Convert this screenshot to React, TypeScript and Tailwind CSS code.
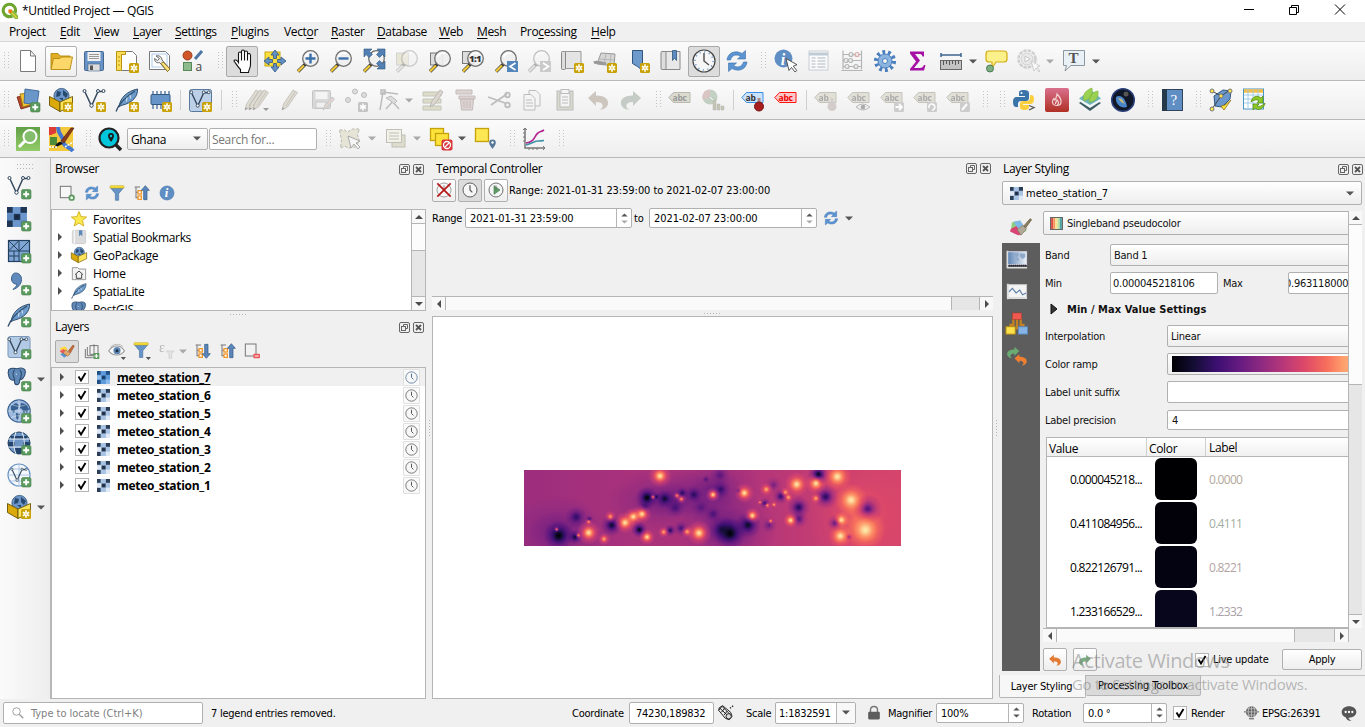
import React from "react";

const ui = "font-['Open_Sans','Noto_Sans',sans-serif] text-[12px] tracking-[-0.35px]";
const tah = "font-['DejaVu_Sans_Condensed','DejaVu_Sans',sans-serif] text-[11px] tracking-[-0.25px] [&_span]:shrink-0 [&_span]:pt-[2px]";

/* ---------- badges shared by many icons ---------- */
const Star = () => (
  <g>
    <rect x="14" y="14" width="10" height="10" rx="1.5" fill="#c9a208" />
    <path d="M19 15.2v7.6M15.8 17.2l6.4 3.6M22.2 17.2l-6.4 3.6" stroke="#fff" strokeWidth="1.6" />
    <circle cx="19" cy="19" r="1" fill="#e8d36a" />
  </g>
);
const Plus = () => (
  <g>
    <rect x="14.5" y="14.5" width="9.5" height="9.5" rx="1.5" fill="#5b9a5e" stroke="#4b844e" strokeWidth=".6" />
    <path d="M19.2 16.2v6M16.2 19.2h6" stroke="#fff" strokeWidth="1.9" />
  </g>
);
const GreyBadge = () => <rect x="14" y="14" width="10" height="10" rx="1.5" fill="#c4c4c4" />;

const Lens = ({ on = true }: { on?: boolean }) => (
  <g opacity={on ? 1 : 0.4}>
    <path d="M9.5 15 2 22.5" stroke="#333" strokeWidth="3.4" />
    <path d="M8 16.5 2 22.4" stroke={on ? "#f2cb3a" : "#ccc"} strokeWidth="2.2" />
    <circle cx="14.5" cy="9.5" r="7.8" fill="#efefef" fillOpacity=".92" stroke="#6f6f6f" strokeWidth="1.3" />
    <path d="M9.5 8a6 6 0 0 1 8-3.5" stroke="#fff" strokeWidth="1.6" fill="none" />
  </g>
);
const Vee = () => (
  <g fill="none" stroke="#34495e" strokeWidth="1.5">
    <path d="M3 4 9.5 18 16 3.5h5" />
    <g fill="#fff" strokeWidth="1">
      <circle cx="2.5" cy="3" r="1.5" />
      <circle cx="9.5" cy="17.5" r="1.7" />
      <circle cx="16" cy="3" r="1.5" />
      <circle cx="21.5" cy="3" r="1.5" />
    </g>
  </g>
);
const Feather = () => (
  <g>
    <path d="M4 19C5 9 13 3 22.5 1 23 8 18 15 6 17.5z" fill="#6d9bcb" stroke="#2f4d6d" strokeWidth="1" />
    <path d="M1 23.5C4 15 12 8 20 3" stroke="#2f4d6d" strokeWidth="1.3" fill="none" />
    <path d="M12 9.5l-.5 4M15 7l.5 3.5" stroke="#dbe8f5" strokeWidth="1" />
  </g>
);
const BoxGlobe = () => (
  <g>
    <circle cx="12.5" cy="8" r="7.6" fill="#6b95c8" stroke="#2e4f74" strokeWidth=".8" />
    <path d="M8 3l4 1-1 4-4 1zM14 2l5 4-2 4-3-3zM10 10l4 0 0 3z" fill="#27496d" />
    <path d="M0.5 8.5 11 14v9.5L.5 17.5z" fill="#d9aa0a" stroke="#6a5200" strokeWidth=".9" />
    <path d="M23.5 8.5 11 14v9.5l12.5-6z" fill="#fbe35a" stroke="#6a5200" strokeWidth=".9" />
  </g>
);
const Tag = ({ t = "abc", fill = "#dcdbd0", stroke = "#b9b8ae", ink = "#999" }: { t?: string; fill?: string; stroke?: string; ink?: string }) => (
  <g>
    <path d="M.8 9.5 5.5 4.5H22v10H5.5z" fill={fill} stroke={stroke} strokeWidth="1" />
    <text x="4.5" y="12.8" fontSize="8.5" fontWeight="700" fill={ink} fontFamily="Open Sans" letterSpacing="-.2">{t}</text>
  </g>
);
const Refresh = () => (
  <g fill="#5b94d0" stroke="#3a70ad" strokeWidth=".6">
    <path d="M2 11C3 3 11 1 17 4.500L20.5 1.5V10h-8l3-2.8C11 5 7 6 5.5 11z" />
    <path d="M22 13c-1 8-9 10-15 6.5L3.5 22.5V14h8l-3 2.8C13 19 17 18 18.5 13z" />
  </g>
);
const Raster = ({ a = "#2b3e58", b = "#a9c3e4", m = "#dfe9f6" }: { a?: string; b?: string; m?: string }) => (
  <g>
    <rect width="24" height="24" fill={b} />
    <rect width="7" height="7" fill={a} />
    <rect x="16" width="8" height="7" fill={a} />
    <rect x="8" y="8" width="8" height="8" fill={a} />
    <rect y="16" width="7" height="8" fill={a} />
    <rect x="7" width="9" height="8" fill={b} />
    <rect x="16" y="16" width="8" height="8" fill={m} />
    <rect x="7" y="16" width="9" height="8" fill={b} />
    <rect y="8" width="8" height="8" fill={m} />
    <path d="M10 10h4v4h-4z" fill="#0d1826" opacity=".5" />
  </g>
);
const Clock = ({ c = "#555" }: { c?: string }) => (
  <g fill="none" stroke={c} strokeWidth="1.4">
    <circle cx="12" cy="12" r="10.5" fill="#f7f7f7" />
    <path d="M12 5v7l3.5 3.5" strokeWidth="1.8" />
  </g>
);
const Globe = () => (
  <g>
    <circle cx="12" cy="12" r="11.2" fill="#9db9de" stroke="#3d6493" strokeWidth="1.2" />
    <path d="M4 7l5-3 3 2-1 4-3 1-1 3-3-3zM14 4l5 1 3 5-2 4-2-2-1 3-2-5-2-1zM9 14l4 1-2 6-2-2z" fill="#35608f" />
    <path d="M1 12h22M12 1v22M4 5c5 3 11 3 16 0M4 19c5-3 11-3 16 0" stroke="#fff" strokeWidth=".6" fill="none" opacity=".7" />
  </g>
);
const Brushy = () => (
  <g>
    <path d="M1 8l8-3 4 5-6 5z" fill="#ffd83c" />
    <path d="M1 12l6-3 6 6-5 4z" fill="#ef5b5b" />
    <path d="M2 17l6-3 5 4-5 4z" fill="#5b94d0" />
    <path d="M10 10l7 6-4 4-7-5z" fill="#e3a869" stroke="#8a5a22" strokeWidth=".7" />
    <path d="M14 12l7-9 2 1.500L17 15z" fill="#c96b35" stroke="#8a4a22" strokeWidth=".8" />
  </g>
);
const SumArrow = ({ up }: { up?: boolean }) => (
  <g>
    <path d="M1 3h8M3 3v17M3 11h4M3 19h6" stroke="#777" strokeWidth="1.5" />
    <rect x="6" y="8.5" width="5" height="5" fill="#fff" stroke="#f29a2e" strokeWidth="2" />
    <rect x="6" y="16.5" width="5" height="5" fill="#fff" stroke="#f29a2e" strokeWidth="2" />
    {up ? <path d="M17 1l6 7h-3.500v14h-5V8H11z" fill="#5a86bb" stroke="#2e547f" /> : <path d="M17 23l6-7h-3.500V2h-5v14H11z" fill="#5a86bb" stroke="#2e547f" />}
  </g>
);
const Funnel = () => (
  <g>
    <path d="M2 4h20l-7.500 9v10h-5V13z" fill="#6794c6" stroke="#3c6797" strokeWidth=".8" />
    <rect x="1.5" y="1" width="21" height="3.5" rx="1" fill="#f9e03c" stroke="#c5a60b" strokeWidth=".8" />
  </g>
);
const Elephant = () => (
  <g fill="#6189b8" stroke="#28486c" strokeWidth="1.2">
    <path d="M2 3c4-3 8-1 10-1 3-1 7-1 9 1 2 4-1 11-5 12l-1 0c0 4-1 6-4 6-3-1-2-5-2-6C3 18 0 8 2 3z" />
    <path d="M9 3c-3 3-2 8 0 11M15 3c3 3 2 9 0 12" fill="none" />
    <path d="M11 8v1" stroke="#fff" />
  </g>
);
const Undo = ({ c }: { c: string }) => <path d="M2 10l8-7v4.500c8 0 13 3 12 9-1 3-4 5-8 5.500 4-3 4-8-4-8V18z" fill={c} />;
const Redo = ({ c }: { c: string }) => <path d="M22 10l-8-7v4.500C6 7.500 1 10.500 2 16.500c1 3 4 5 8 5.500-4-3-4-8 4-8V18z" fill={c} />;
const Pencil = ({ x = 0 }: { x?: number }) => (
  <g transform={`translate(${x} 0)`}>
    <path d="M4 22l1.500-6L15 2l4.500 2.500L9.500 19z" fill="#dedbd3" stroke="#bfbcb5" strokeWidth=".8" />
    <path d="M4 22l.6-2.500 2 1z" fill="#999" />
    <path d="M8 18L17 4" stroke="#c6c3bb" strokeWidth="1" />
  </g>
);

const icons: Record<string, React.ReactNode> = {
  qgis: (
    <g>
      <path d="M12 1a11 11 0 1 0 5.500 20.500l-3.300-3.800A6.500 6.500 0 1 1 18 13.500l3.500 3.500A11 11 0 0 0 12 1z" fill="#6da52f" />
      <path d="M12 12h5l7 7v5h-4l-8-8z" fill="#8dbb35" />
      <path d="M10.500 10.500h5v5h-5z" fill="#ee7913" />
      <path d="M15 15l7 7" stroke="#f3d84a" strokeWidth="1.5" />
    </g>
  ),
  new: <path d="M4.500 1.500h10l5 5.500v15.500h-15zM14.500 1.500V7h5" fill="#fff" stroke="#7b7b7b" />,
  open: (
    <g stroke="#b68a0c" strokeWidth=".9">
      <path d="M2 20V4.500h7l2 2.500h10v13z" fill="#dfae24" />
      <path d="M2 20.500 4.500 9.500H11l1.500-1.500H23.500L21 20.500z" fill="#fcd769" />
    </g>
  ),
  save: (
    <g>
      <rect x="2.5" y="2.5" width="19" height="19" rx="1" fill="#6792c5" stroke="#46688f" />
      <rect x="5.5" y="3" width="13" height="9" fill="#f1f1f1" />
      <path d="M7 5.500h10M7 7.500h10M7 9.500h10" stroke="#9a9a9a" />
      <rect x="6" y="15" width="12" height="7" fill="#dcdcdc" stroke="#46688f" strokeWidth=".6" />
      <rect x="8" y="16.5" width="3" height="4.5" fill="#555" />
    </g>
  ),
  layout: (
    <g>
      <path d="M6.500 2.500h11l4 4v15h-15z" fill="#fff" stroke="#777" />
      <path d="M1.500 2.500h9v3h-4v16h-5z" fill="#fbdd58" stroke="#b99210" />
      <path d="M3 8h2M3 12h2M3 16h2" stroke="#b99210" />
      <Star />
    </g>
  ),
  manager: (
    <g>
      <path d="M1.500 2.500h16l4 4v14h-20z" fill="#fff" stroke="#777" />
      <rect x="4" y="5" width="15" height="13" fill="none" stroke="#aecbe8" />
      <path d="M8 7c3-1 6 1 6 4l8 9-2.500 2.500-8-9c-3 1-5-1-5-4l3 2 2-2z" fill="#eee" stroke="#666" />
      <path d="M15 13l7 7-2.500 2.500-6.500-8z" fill="#f8e07a" stroke="#8a6d1c" strokeWidth=".8" />
    </g>
  ),
  style: (
    <g>
      <circle cx="6.5" cy="6.500" r="4.5" fill="#d0562a" stroke="#9a3d1c" />
      <path d="M14 10l7-8" stroke="#4d75a6" strokeWidth="3" />
      <rect x="2.5" y="13.500" width="8" height="8" fill="#8dbb8e" stroke="#56885a" />
      <text x="14.5" y="21.500" fontSize="12" fill="#444" fontFamily="Open Sans">a</text>
    </g>
  ),
  hand: <path d="M8 23v-3C5 17 3.500 14 1.500 11.500c.5-2 3-1 4.500 1.500V4c0-2 3-2 3 0V2c0-2 3-2 3 0v1c0-2 3-2 3 0v2c.5-1.500 3-1.500 3 1v9c0 4-2 5-2 8zM9 4v7M12 3v8M15 5v6" fill="#fff" stroke="#111" strokeWidth="1.1" transform="translate(2.5 .5)" />,
  pan: (
    <g>
      <rect x="2" y="3" width="15" height="14" fill="#fadf3d" stroke="#c8a70b" />
      <path d="M12 1l4 5h-2.500v3.500h-3V6H8zM12 23l4-5h-2.500v-3.500h-3V18H8zM1 12l5-4v2.500h3.500v3H6V16zM23 12l-5-4v2.500h-3.500v3H18V16z" fill="#6391c6" stroke="#2f567f" strokeWidth=".8" />
    </g>
  ),
  zin: <g><Lens /><path d="M14.500 4.500v10M9.500 9.500h10" stroke="#3d70aa" strokeWidth="2.4" /></g>,
  zout: <g><Lens /><path d="M9.500 9.500h10" stroke="#3d70aa" strokeWidth="2.4" /></g>,
  zfull: (
    <g><Lens />
      <path d="M2 0h8L7.500 2.500l3 3-3.500 3-3-3L2 8zM23 0v8l-2.500-2.500-3 3-3-3 3-3L15 0zM23 20h-8l2.500-2.500-3-3 3-3 3 3L23 12z" fill="#527fb4" stroke="#2f567f" strokeWidth=".6" />
    </g>
  ),
  zsel: <g opacity=".8"><rect x="1.5" y="4" width="12" height="12" fill="#e4e2cd" stroke="#ccc" /><Lens on={false} /></g>,
  zlay: <g><rect x="2.5" y="4" width="12" height="12" fill="#ddd" stroke="#777" /><Lens /></g>,
  znat: <g><rect x="1.5" y="2.5" width="12" height="12" fill="#ddd" stroke="#777" /><Lens /><text x="8" y="13" fontSize="9.5" fontWeight="800" fill="#333" fontFamily="Open Sans" letterSpacing="-.6">1:1</text></g>,
  zlast: <g><Lens /><rect x="13" y="12" width="11" height="11" fill="#5386bb" /><path d="M21.500 14l-5.500 3.500 5.500 3.500" fill="none" stroke="#fff" strokeWidth="1.7" /></g>,
  znext: <g><Lens on={false} /><rect x="13" y="12" width="11" height="11" fill="#cacaca" /><path d="M16 14l5.500 3.500-5.500 3.500" fill="none" stroke="#fff" strokeWidth="1.7" /></g>,
  nmap: <g><path d="M5 2.500h16v17H5z" fill="#e4e4e4" stroke="#999" /><rect x="1.5" y="2.5" width="4" height="18" rx="1" fill="#ddd" stroke="#888" /><Star /></g>,
  n3d: <g><path d="M8 4l14 1-1 12-17-2z" fill="#d6d6d6" stroke="#999" /><path d="M1 14c4-3 8 2 12 0" stroke="#999" strokeWidth="3" fill="none" /><path d="M6 10l15 1M13 5l-2 10M18 5l-1 11" stroke="#aaa" strokeWidth=".7" /><Star /></g>,
  nbook: <g><path d="M6.500 1.500h10v20l-5-4-5-3z" fill="#6d99cb" stroke="#2f567f" /><Star /></g>,
  book: <g><path d="M5 2.500h16v18H5z" fill="#e8e8e8" stroke="#888" /><rect x="2" y="2.5" width="5" height="18" rx="1" fill="#ddd" stroke="#888" /><path d="M13.500 1.500h4v10l-2-2.500-2 2.500z" fill="#5f8cc0" stroke="#2f567f" strokeWidth=".8" /></g>,
  clockbig: (
    <g fill="none">
      <circle cx="12" cy="12" r="11" fill="#f6f6f6" stroke="#444" strokeWidth="1.2" />
      <circle cx="12" cy="12" r="9" stroke="#6b9bd0" strokeWidth="1.5" strokeDasharray="1.2 3.5" />
      <path d="M12 4v8l5 4" stroke="#555" strokeWidth="1.5" />
    </g>
  ),
  refresh: <Refresh />,
  ident: (
    <g>
      <circle cx="9.5" cy="9.5" r="9" fill="#5f8ec4" />
      <text x="6.8" y="15.5" fontSize="16" fontStyle="italic" fontWeight="700" fill="#fff" fontFamily="Liberation Serif">i</text>
      <path d="M12 9.500l3 12 2.500-3 3.500 4.500 1.800-1.500-3.500-4.300 3.700-1.500z" fill="#fff" stroke="#444" strokeWidth=".9" />
    </g>
  ),
  table: (
    <g opacity=".6" fill="none" stroke="#aab6bf">
      <rect x="2" y="2" width="19" height="19" fill="#fff" />
      <path d="M2 5h19" stroke="#9cb0bf" strokeWidth="3" />
      <path d="M4.500 9h4M4.500 12h4M4.500 15h4M4.500 18h4M10.500 9h8M10.500 12h8M10.500 15h8M10.500 18h8" strokeWidth="1.3" />
    </g>
  ),
  abacus: (
    <g fill="none" stroke="#b5b5b5" strokeWidth="1.2">
      <path d="M3 1.500v19M21.500 1.500v19M1.500 21.500h21M3 5.500h18M3 11.500h18M3 17.500h18" />
      <g fill="#eee"><circle cx="11" cy="5.5" r="2" /><circle cx="17" cy="5.5" r="2" stroke="#d9a9a9" /><circle cx="6" cy="11.5" r="2" /><circle cx="10.5" cy="11.5" r="2" /><circle cx="7" cy="17.5" r="2" /><circle cx="16" cy="17.5" r="2" /></g>
    </g>
  ),
  gear: (
    <g>
      <circle cx="12" cy="12" r="8.8" fill="none" stroke="#4a7fbd" strokeWidth="4.5" strokeDasharray="2.76 2.76" />
      <circle cx="12" cy="12" r="7" fill="#8bb4e0" stroke="#4a7fbd" />
      <circle cx="12" cy="12" r="2.5" fill="#f4f4f4" stroke="#4a7fbd" />
    </g>
  ),
  sigma: <path d="M4 2.500h14v5h-1.500c-.5-2-1.500-2.500-3.500-2.500H9l5 6.500L8 19h6c2 0 3-1 4-3h1.500L18 21.500H4v-1.500l6-7.500-6-8z" fill="#a510a5" />,
  ruler: <g><path d="M2 6h20M2 4v4M22 4v4" stroke="#3f6690" strokeWidth="1.5" /><rect x="1.5" y="11.5" width="21" height="9" fill="#c3c3c3" stroke="#666" /><path d="M4.500 12v4M7.500 12v3M10.500 12v4M13.500 12v3M16.500 12v4M19.500 12v3" stroke="#555" /></g>,
  tip: <g><path d="M4 2h16q3 0 3 3v5q0 3-3 3h-8l-4 6v-6H5q-3 0-3-3V5q0-3 3-3z" fill="#fcf08a" stroke="#d2ad11" strokeWidth="1.2" /><circle cx="6" cy="19.5" r="3.5" fill="#7cae82" stroke="#4a7b52" /></g>,
  action: <g opacity=".5"><circle cx="10" cy="10" r="8.5" fill="none" stroke="#aaa" strokeWidth="2.5" strokeDasharray="3.5 1" /><circle cx="10" cy="10" r="6" fill="#ddd" stroke="#aaa" /><path d="M8 7l5 3-5 3z" fill="#fff" stroke="#999" /><path d="M14 12l3 10 2-3 3 4 1-1-3-4 3-1z" fill="#fff" stroke="#999" strokeWidth=".8" /></g>,
  text: <g><path d="M1.500 1.500h21v15H9L3 22l1.500-5.500h-3z" fill="#e9f0f6" stroke="#8c979f" /><text x="6.5" y="14" fontSize="15" fontWeight="700" fill="#555" fontFamily="Liberation Serif">T</text></g>,
  layers: <g strokeWidth=".9"><path d="M1 9l11-2 3 11-10 3z" fill="#b5452a" stroke="#7a2b18" /><path d="M4 6l12-1 1 11-10 3z" fill="#f1c233" stroke="#9a760e" /><path d="M9 1l14 2-2 14-13-2z" fill="#6a97ca" stroke="#3a6798" /><Plus /></g>,
  gpkg: <g><BoxGlobe /><Star /></g>,
  vstar: <g><Vee /><Star /></g>,
  fstar: <g><Feather /><Star /></g>,
  chip: <g><path d="M5 3v18M9 3v18M13 3v18M17 3v18M21 3v18" stroke="#466d9a" strokeWidth="1.3" /><rect x="3" y="6.5" width="19" height="10" rx="1" fill="#6794c8" stroke="#33587f" /><Star /></g>,
  virt: <g><rect x="1.5" y="1.5" width="22" height="22" rx="2" fill="#bcd0e7" stroke="#58799d" /><g transform="translate(1 1.5) scale(.92)"><Vee /></g><Star /></g>,
  pencils: <g><Pencil x={-4} /><Pencil x={0} /><Pencil x={4} /><path d="M18 20h6l-3 3z" fill="#999" /></g>,
  pencil: <Pencil />,
  saveed: <g opacity=".75"><rect x="1.5" y="2.5" width="18" height="18" rx="1" fill="#d0d0d0" stroke="#b5b5b5" /><rect x="4.5" y="4" width="12" height="7" fill="#f4f4f4" /><rect x="5" y="14" width="10" height="6" fill="#f0f0f0" stroke="#bbb" /><path d="M12 22l2-5 7-8 2.500 2-7 8z" fill="#dac9c4" stroke="#bbb" /></g>,
  addpts: <g><circle cx="4" cy="12" r="2.500" fill="#ddd" stroke="#bbb" /><circle cx="11" cy="3.5" r="2.500" fill="#ddd" stroke="#bbb" /><circle cx="20" cy="7" r="2.500" fill="#ddd" stroke="#bbb" /><GreyBadge /><path d="M19 15.500v7M16 17.500l6 3M22 17.500l-6 3" stroke="#fff" strokeWidth="1.5" /></g>,
  vertex: <g fill="none" stroke="#bbb" strokeWidth="1.5"><path d="M3 22L6 4l15 2M4 2h4v4H4zM9 21l9-10M14 12l8 9" /><path d="M9 10l5-2 6 5-3 3-3-3z" fill="#ddd" strokeWidth="1" /></g>,
  modattr: <g><path d="M2 4h18v4H2zM2 11h18v4H2zM2 18h18v4H2z" fill="#dddccb" stroke="#c4c4b8" /><path d="M9 19l2-6L19 2l3 2-8 12z" fill="#ddd6d0" stroke="#bdbab4" /></g>,
  trash: <g fill="#dcd3d3" stroke="#c6bbbb"><path d="M2 2h16v4H2z" /><path d="M5 8h16v3H5zM6.500 11h13l-1 11h-11zM10 13v7M13 13v7M16 13v7" /></g>,
  cut: <g stroke="#bdbdbd" fill="none" strokeWidth="1.800"><path d="M1 9l17 6M4 17L20 6" /><circle cx="20.5" cy="17" r="2.300" /><circle cx="20.5" cy="7" r="2.300" /></g>,
  copy: <g fill="#f4f4f4" stroke="#bcbcbc"><path d="M9 2.500h7l4 4V18H9z" /><path d="M4 6.500h7l4 4V22H4zM6 12h6M6 15h7M6 18h7" /></g>,
  paste: <g fill="#f4f4f4" stroke="#bcbcbc"><rect x="4" y="3" width="16" height="19" fill="#d9d9cf" /><rect x="7" y="5" width="10" height="14" /><rect x="8" y="1.5" width="8" height="4" /><path d="M9 9h6M9 12h6M9 15h6" /></g>,
  undo: <Undo c="#cdc6bf" />,
  redo: <Redo c="#c4ccc5" />,
  tag: <g transform="translate(1 0)"><Tag /></g>,
  diag: <g opacity=".8"><circle cx="9" cy="9" r="7.5" fill="#b7c7b8" /><path d="M9 9V1.500A7.500 7.500 0 0 0 2 12z" fill="#d4b9b9" /><path d="M9 9l5 5" stroke="#fff" /><path d="M12 12h3v10h-3zM16 16h3v6h-3zM20 18h3v4h-3z" fill="#b9b9a4" stroke="#aaa" strokeWidth=".5" /></g>,
  pinred: <g><Tag t="ab" fill="#cbe2fb" stroke="#3b8fe8" ink="#333" /><path d="M18 10v8" stroke="#a88" strokeWidth="3" /><circle cx="18" cy="18.5" r="4.5" fill="#a81e1e" stroke="#7a1313" /></g>,
  tagred: <Tag fill="#fbc9c9" stroke="#ff1414" ink="#f00000" />,
  tpin: <g opacity=".8"><Tag t="ab" /><path d="M18 10v8" stroke="#ccc3c3" strokeWidth="2.500" /><circle cx="18" cy="18.5" r="4.5" fill="#ccc3c3" /></g>,
  teye: <g opacity=".8"><Tag /><path d="M9 19q6-6 14 0q-7 6-14 0" fill="#eee" stroke="#aaa" /><circle cx="16" cy="19" r="2.3" fill="#999" /></g>,
  tmove: <g opacity=".8"><Tag /><GreyBadge /><path d="M15.500 19h6M19 16l3 3-3 3" stroke="#fff" strokeWidth="1.8" fill="none" /></g>,
  trot: <g opacity=".8"><Tag /><GreyBadge /><path d="M16 20a3 3 0 1 1 3 2" stroke="#fff" strokeWidth="1.6" fill="none" /></g>,
  tedit: <g opacity=".8"><Tag /><GreyBadge /><path d="M16 22l5-6" stroke="#fff" strokeWidth="2" /></g>,
  python: (
    <g>
      <path d="M12 2c-4 0-5 1-5 3v3h6v1H5c-3 0-4 2-4 5s1 5 3 5h2v-3c0-2 1-3 3-3h5c2 0 3-1 3-3V5c0-2-2-3-5-3z" fill="#3b74a8" />
      <path d="M12 22c4 0 5-1 5-3v-2h-6v-1h7c3 0 4-2 4-5s-1-4-3-4h-1v3c0 2-1 3-3 3h-4c-2 0-3 1-3 3v3c0 2 1 3 4 3z" fill="#fccf3e" />
      <circle cx="9.5" cy="5" r="1" fill="#fff" />
      <path d="M17 17.500l5 2-5 2.500" fill="none" stroke="#555" strokeWidth="1.3" />
    </g>
  ),
  fire: <g><defs><linearGradient id="fr" x2="0" y2="1"><stop stopColor="#d9708c" /><stop offset="1" stopColor="#b03024" /></linearGradient></defs><rect width="24" height="24" rx="2" fill="url(#fr)" /><path d="M12 6c3 3 4 5 4 7.500s-1.500 4-4 4-4.500-1.500-4.500-3.500 1-3 1.500-3.500l1 1.500c1-2 2-3.500 2-6zM10.500 16c0-3 1.500-2 1.500-4 2 2 2 4.500 0 4.500" fill="none" stroke="#f3d4d4" strokeWidth="1.2" /></g>,
  leaf: <g><path d="M1 15l11 8 11-8-4-2-14-1z" fill="#3c5b62" /><path d="M1 13l11 7 11-7-11-6z" fill="#f1f6f6" /><path d="M1 10.500L12 17l11-6.500L13 2z" fill="#6fb5b8" /><path d="M6 13C4 6 8 2 14 0c1 6-1 11-8 13zM11 14c0-6 3-10 9-11 1 7-3 11-9 11z" fill="#9bd150" stroke="#78ae34" strokeWidth=".5" /></g>,
  earth: <g><circle cx="12" cy="12" r="11.3" fill="#101728" stroke="#2b417d" strokeWidth="1.5" /><path d="M5 9c5-3 10 2 11 10-6 2-12-3-11-10z" fill="#4a86ca" /><path d="M7 10l4 1 3 5-4-2z" fill="#c5b97d" /><circle cx="15" cy="6" r="2.500" fill="#555" /></g>,
  help: <g><rect x="2.5" y="1.5" width="20" height="21" fill="#5f8ec5" stroke="#31455c" /><rect x="2" y="1" width="5" height="22" fill="#26394b" /><text x="10.5" y="17" fontSize="15" fill="#fff" fontFamily="Liberation Serif">?</text></g>,
  topo: <g><path d="M5 8l9-6 8 1-1 8-8 8-7-1z" fill="#6b98cc" stroke="#305580" /><path d="M3 21L12 8l9-6M3 3l9 5" stroke="#444" fill="none" /><path d="M12 18l3 4 7-10-6 5z" fill="#ffe23c" stroke="#8a6f10" strokeWidth=".8" /><g fill="#ffe84e" stroke="#777"><circle cx="3" cy="3" r="2" /><circle cx="21" cy="3" r="2" /><circle cx="12" cy="8" r="2" /><circle cx="3" cy="21" r="2" /></g></g>,
  sheet: <g><rect x="1.5" y="1" width="20" height="20" fill="#fff" stroke="#4a97c6" /><path d="M2 3h19" stroke="#f3bd4a" strokeWidth="3.5" /><path d="M2 7h19M2 11h19M2 15h19M6 2v18M11 2v18M16 2v18" stroke="#9ac8e5" strokeWidth=".9" /><path d="M9 14c1-6 7-7 10-4l2-2v7h-6l2-2c-2-2-5-1-8 1zM23 15c-1 6-7 8-10 5l-2 2v-6h6l-2 2c2 1 5 0 8-3z" fill="#8bc926" stroke="#56870f" strokeWidth=".7" /></g>,
  osm: <g><defs><linearGradient id="gr" x2="0" y2="1"><stop stopColor="#62a047" /><stop offset="1" stopColor="#93cc69" /></linearGradient></defs><rect width="24" height="24" fill="url(#gr)" /><circle cx="14" cy="9.5" r="6.5" fill="#84bd6b" stroke="#fff" strokeWidth="2" /><path d="M9 14l-6 6" stroke="#fff" strokeWidth="3" /></g>,
  osmed: <g><rect width="24" height="24" fill="#f4c83c" /><path d="M9 0c0 8 5 8 5 14s6 5 10 10" stroke="#4378d2" strokeWidth="4" fill="none" /><path d="M1 10h7v8H1z" fill="#4f8c3a" /><path d="M0 0h7v6l-5 2-2 0z" fill="#de3a36" /><path d="M12 14L22 1l3 0-10 15z" fill="#8c3b1a" stroke="#54220f" strokeWidth=".7" /><path d="M5 21c2-4 5-7 7-6l2 2c-3 1-5 2-9 4z" fill="#111" /><path d="M0 20h8M16 20l8-5" stroke="#fff" strokeWidth="1.5" strokeDasharray="2 1" /></g>,
  find: <g><circle cx="11" cy="11" r="9.5" fill="#00c6dc" stroke="#222" strokeWidth="2.2" /><path d="M18 18l5 5" stroke="#222" strokeWidth="3.5" /><path d="M13 6a3 3 0 0 1 3 3c0 2-3 6-3 6s-3-4-3-6a3 3 0 0 1 3-3z" fill="#1c1c1c" /><circle cx="13" cy="9" r="1.2" fill="#00c6dc" /></g>,
  selfeat: <g><path d="M1.500 3h5l3 2 5-3h7l-2 6 2 6-4 6-7 1-4-2-4 2 1-8z" fill="#e5e4d6" stroke="#b9b9ac" strokeDasharray="3 1.5" /><path d="M10 9l3 12 3-4 4 5 2-2-4-4 4-2z" fill="#f5f5f5" stroke="#aaa" /></g>,
  selform: <g stroke="#c0c0b5"><rect x="7" y="8" width="13" height="12" fill="#dddcce" /><rect x="1.5" y="2.5" width="15" height="13" fill="#f2f2ea" /><path d="M4 6h10M4 9h10M4 12h10" /></g>,
  desel: <g><rect x="1.5" y="1.5" width="13" height="12" fill="#fde23c" stroke="#c5a20b" strokeWidth="1.3" /><rect x="6.5" y="6.5" width="13" height="12" fill="#fde23c" stroke="#c5a20b" strokeWidth="1.3" /><rect x="12.5" y="12.5" width="11" height="11" rx="2" fill="#d9363c" /><circle cx="18" cy="18" r="3.5" fill="none" stroke="#fff" strokeWidth="1.3" /><path d="M15.500 20.500l5-5" stroke="#fff" strokeWidth="1.2" /></g>,
  selloc: <g><rect x="2.5" y="1.5" width="13" height="13" fill="#fde752" stroke="#c5a20b" strokeWidth="1.3" /><path d="M19.500 12.500a3.300 3.300 0 0 1 3.300 3.300c0 2.200-3.300 6.200-3.300 6.200s-3.300-4-3.300-6.200a3.300 3.300 0 0 1 3.300-3.300z" fill="#56779a" /><circle cx="19.5" cy="15.5" r="1.2" fill="#fff" /></g>,
  plot: <g fill="none"><path d="M3 1v20h20" stroke="#777" strokeWidth="1.5" /><path d="M1 3l2-2 2 2M21 19l2 2-2 2M1 6h2M1 10h2M1 14h2M7 21v2M11 21v2M15 21v2" stroke="#777" /><path d="M4 16c9-1 8-7 12-10 2-2 3-1 6-3" stroke="#b3218d" strokeWidth="1.6" /><path d="M4 18c8-2 8-4 12-4 3 0 3 0 6-.500" stroke="#3d93a9" strokeWidth="1.5" /></g>,
  vplus: <g><Vee /><Plus /></g>,
  rplus: <g><g transform="scale(.83)"><Raster a="#1f3553" b="#6c96cc" m="#5c87bd" /></g><Plus /></g>,
  mesh: <g><rect x="1.5" y="1.5" width="21" height="21" fill="#7ea5d3" stroke="#24405f" strokeWidth="1.2" /><path d="M1.500 12h21M12 1.500v21M1.500 1.500l10.500 10.500M12 1.500L1.500 12M22.500 1.500L12 12M7 12v10M1.500 17H12" stroke="#24405f" fill="none" /><Plus /></g>,
  comma: <g><path d="M8.500 2c4 0 6 3 6 6.500C14.500 13 11 17 6 18.500c2.500-2.500 4-4 4-5.500-3 .5-5.500-2-5.500-5S6 2 8.500 2z" fill="#5f8abb" stroke="#3b6490" /><Plus /></g>,
  fplus: <g><Feather /><Plus /></g>,
  vlplus: <g><rect x="1" y="1.5" width="22" height="21" rx="2" fill="#b2cae5" stroke="#7b98b9" /><g transform="translate(0 1.5) scale(.9)"><Vee /></g><Plus /></g>,
  pgplus: <g><g transform="scale(.85)"><Elephant /></g><Plus /></g>,
  gplus: <g><Globe /><Plus /></g>,
  wcs: <g><circle cx="12" cy="12" r="11" fill="#6c94c4" stroke="#24405f" /><path d="M4 5h16v3H4zM1 11h7v5H1zM16 11h7v5h-7zM8 17h8v6H8z" fill="#24466e" /><path d="M1 8h22M1 16h22M9 1c-3 8-3 14 0 22M15 1c3 8 3 14 0 22" stroke="#e8eff7" fill="none" /><Plus /></g>,
  wfs: <g><circle cx="12" cy="12" r="11" fill="#f5f8fc" stroke="#6e97c5" strokeWidth="1.2" /><path d="M1 12h22M12 1v22M3 6h18M3 18h18" stroke="#9dbbe0" strokeWidth=".8" /><g transform="translate(3 4) scale(.75)"><Vee /></g><Plus /></g>,
  boxadd: <g><BoxGlobe /><Star /></g>,
  addsq: <g><rect x="2" y="2" width="16" height="17" fill="#f7f7f7" stroke="#777" strokeWidth="1.5" /><circle cx="19" cy="19" r="3.5" fill="#e9f5e9" stroke="#5b9a5e" strokeWidth="2.5" /></g>,
  rmsq: <g><rect x="2" y="1.5" width="16" height="18" fill="#f2f2f2" stroke="#777" strokeWidth="1.5" /><rect x="14" y="16" width="10" height="7" rx="1.5" fill="#ea5558" /><path d="M16 19.500h6" stroke="#fff" strokeWidth="1.5" /></g>,
  funnel: <Funnel />,
  funneldd: <g><g transform="scale(.9)"><Funnel /></g><path d="M17 20h7l-3.500 4z" fill="#555" /></g>,
  up: <SumArrow up />,
  down: <SumArrow />,
  info: <g><circle cx="12" cy="12" r="10.5" fill="#5f8ec4" stroke="#4a78ad" /><text x="8.5" y="18.5" fontSize="19" fontStyle="italic" fontWeight="700" fill="#fff" fontFamily="Liberation Serif">i</text></g>,
  fav: <path d="M12 .8l3.200 7.700 8.300.5-6.400 5.300 2.100 8.300L12 18l-7.200 4.600 2.100-8.300L.5 9l8.300-.5z" fill="#fce94f" stroke="#c9a50a" strokeWidth="1.2" />,
  bm: <g><rect x="2" y="2" width="20" height="20" rx="2" fill="#dcdcdc" stroke="#c4c4c4" /><path d="M5 2v20" stroke="#f5f5f5" strokeWidth="2" /><path d="M12 2h5v9l-2.500-2.500L12 11z" fill="#6189b8" /></g>,
  pkg: <BoxGlobe />,
  home: <g><path d="M2 4h8l2 2h10v16H2z" fill="#f3f3f3" stroke="#8a8a8a" strokeWidth="1.3" /><path d="M6 14.500L12 9l6 5.500M8 14v6h8v-6" stroke="#444" strokeWidth="1.5" fill="none" /></g>,
  sl: <Feather />,
  pg: <Elephant />,
  brush: <Brushy />,
  group: <g fill="#f2f2f2" stroke="#666" strokeWidth="1.3"><path d="M2 9v13h11M5 6v13h11" fill="none" /><rect x="9" y="4" width="12" height="13" /><path d="M15 2v15" /><rect x="14" y="15" width="9" height="9" rx="1" fill="#5b9a5e" stroke="none" /><path d="M18.500 16.500v6M15.500 19.500h6" stroke="#fff" strokeWidth="1.7" /></g>,
  eye: <g><path d="M1 12c5-9 16-9 21 0-5 7-16 7-21 0z" fill="#fbfbfb" stroke="#999" strokeWidth="1.5" /><circle cx="12" cy="11.5" r="4.8" fill="#5f87b6" /><circle cx="12" cy="11.5" r="2" fill="#1d2e44" /><path d="M3 7c5-5 12-5 17-1" stroke="#aaa" fill="none" /><path d="M17 20h7l-3.500 4z" fill="#555" /></g>,
  eps: <g opacity=".7"><text x="0" y="14" fontSize="21" fill="#999" fontFamily="Liberation Serif">ε</text><path d="M11 12h12l-4 4v7h-4v-7z" fill="#ddd" stroke="#bbb" /></g>,
  raster: <Raster />,
  rastersel: <Raster a="#1f4f85" b="#5f9bdc" m="#8fbcea" />,
  clock: <Clock />,
  clockblue: <Clock c="#4a6c92" />,
  noclock: <g><Clock c="#999" /><path d="M2 2l20 20M22 2L2 22" stroke="#b61b1b" strokeWidth="2.6" /></g>,
  play: <g><circle cx="12" cy="12" r="10.5" fill="#f5f5f5" stroke="#666" strokeWidth="1.4" /><path d="M9 5.500l9 6.500-9 6.500z" fill="#5f9f68" stroke="#467b4d" /><path d="M12 5v8" stroke="#666" /></g>,
  pseudo: <g><rect x="1" y="1" width="22" height="22" fill="#fff" stroke="#666" strokeWidth="2" /><path d="M2 2h4v20H2z" fill="#d94f40" /><path d="M6 2h4v20H6z" fill="#f5955a" /><path d="M10 2h4v20h-4z" fill="#fde28c" /><path d="M14 2h4v20h-4z" fill="#b5e0a0" /><path d="M18 2h4v20h-4z" fill="#4fa0a0" /></g>,
  symb: <g><path d="M2 7l9-2 7 11-8 5-9-5z" fill="#8bd07c" /><path d="M4 6l7-1 4 6-7 3z" fill="#7fb8e6" /><path d="M1 14l6-3 6 9-4 1-9-4z" fill="#d94573" /><path d="M8 15l6-5 4 4-6 7z" fill="#b3aa97" stroke="#847b69" strokeWidth=".8" /><path d="M15 11l7-8 1.500 1L17 13z" fill="#8d8263" stroke="#6e6547" /></g>,
  transp: <g><defs><linearGradient id="tp"><stop stopColor="#5c82b5" /><stop offset="1" stopColor="#eef2f6" /></linearGradient></defs><rect x="1.5" y="3" width="21" height="14" fill="url(#tp)" stroke="#dde" /><path d="M9 5l4-1 1 3-3 2zM12 8l2 3-1 3-2-3zM15 5l6 0 0 4-3 2-3-3z" fill="#8fa9c9" /><path d="M1.500 2v19M1 20.500h22" stroke="#ddd" strokeWidth="1.800" /><path d="M3 18h19" stroke="#223" strokeWidth="1.500" strokeDasharray="1.5 .7" /></g>,
  histo: <g><rect x="1.5" y="4" width="21" height="14" fill="#f4f4f4" stroke="#ccc" /><path d="M3 12l4-4 4 5 4-3 3 5 4-2" stroke="#5c7fa8" strokeWidth="1.2" fill="none" /><path d="M2 3v17M1 18.500h22" stroke="#ddd" strokeWidth="2" /></g>,
  attr: <g><path d="M8 5v8H5v5M16 5v8h3v5M12 6v12" stroke="#c68222" strokeWidth="2.5" fill="none" /><rect x="7" y="0" width="10" height="7" fill="#ee5a50" stroke="#b53329" strokeWidth=".6" /><rect x="0" y="15" width="10" height="8" fill="#fde14b" stroke="#b98f12" /><rect x="13.5" y="15" width="10" height="8" fill="#84b3e6" stroke="#5b88bb" /></g>,
  hist: <g><g transform="translate(0 0) scale(.66)"><Redo c="#6aab72" /></g><g transform="translate(8 8) scale(.66)"><Undo c="#f07f32" /></g></g>,
  undoc: <Undo c="#e27b33" />,
  redoc: <Redo c="#79ad82" />,
  mag: <g fill="none" stroke="#999" strokeWidth="1.8"><circle cx="9" cy="9" r="7.5" /><path d="M14.500 14.500l8 8" strokeWidth="2.5" /></g>,
  mouse: <g fill="none" stroke="#222" strokeWidth="1.500"><path d="M2 4l5-3 12 10 2 6-4 5-6-2L1 8z" fill="#eee" /><path d="M3 5l14 13M6 2l13 13M1 8l5-6M5 11l5-6M9 15l5-6" /><circle cx="16" cy="17" r="4" fill="#ddd" /><path d="M18 5l5-4" strokeDasharray="2 2" strokeWidth="2" /></g>,
  lock: <g><path d="M6 12V7c0-8 12-8 12 0v5" fill="none" stroke="#777" strokeWidth="2.5" /><rect x="2" y="10" width="20" height="13" rx="2" fill="#5d5d5d" /></g>,
  crs: <g><circle cx="12" cy="11" r="9" fill="#666" /><path d="M0 11h24M5 6h14M5 16h14M9 20h6v3H9zM9 2.500c-3 5-3 12 0 17M15 2.500c3 5 3 12 0 17M12 2v18" stroke="#d5d5d5" fill="none" strokeWidth="1" /><path d="M0 11h3M21 11h3M8 22h8" stroke="#555" strokeWidth="1.500" /></g>,
  msg: <g><path d="M12 2c6 0 11 3.500 11 8.500S18 19 12 19h-1c1 2 3 4 5 5-5 0-8-2-9-5.500C3 17 1 14 1 10.500 1 5.500 6 2 12 2z" fill="#555" /><circle cx="7" cy="10.5" r="1.7" fill="#fff" /><circle cx="12" cy="10.5" r="1.7" fill="#fff" /><circle cx="17" cy="10.5" r="1.7" fill="#fff" /></g>,
};

const I = ({ n, c = "ml-[9px]", s = "size-6" }: { n: string; c?: string; s?: string }) => (
  <svg viewBox="0 0 24 24" className={`shrink-0 overflow-visible ${s} ${c}`}>{icons[n]}</svg>
);

/* caret used by drop-down tool buttons */
const Dd = ({ c = "", off = false }: { c?: string; off?: boolean }) => (
  <svg viewBox="0 0 8 5" className={`h-[5px] w-2 shrink-0 ${c}`}><path d="M0 .5h8L4 4.500z" fill={off ? "#a9a9a9" : "#555"} /></svg>
);
const UpDown = ({ off = false }: { off?: boolean }) => (
  <div className="flex h-full w-[15px] flex-col items-center justify-center gap-[3px] border-l border-[#b5b5b5]">
    <svg viewBox="0 0 8 5" className="h-[4px] w-[7px]"><path d="M0 4.500h8L4 .5z" fill="#555" /></svg>
    <svg viewBox="0 0 8 5" className="h-[4px] w-[7px]"><path d="M0 .5h8L4 4.500z" fill={off ? "#a9a9a9" : "#555"} /></svg>
  </div>
);
const Tri = ({ d, c = "" }: { d: "l" | "r" | "u" | "d"; c?: string }) => {
  const p = { l: "M6 0v8L2 4z", r: "M2 0v8l4-4z", u: "M0 6h8L4 2z", d: "M0 2h8L4 6z" }[d];
  return <svg viewBox="0 0 8 8" className={`size-2 shrink-0 ${c}`}><path d={p} fill="#4d4d4d" /></svg>;
};
const Grip = ({ c = "" }: { c?: string }) => (
  <div className={`flex h-[18px] w-[5px] shrink-0 justify-between ${c}`}>
    <div className="w-px bg-[repeating-linear-gradient(#c4c4c4_0_1px,transparent_1px_3px)]" />
    <div className="w-px bg-[repeating-linear-gradient(#c4c4c4_0_1px,transparent_1px_3px)]" />
  </div>
);
const HGrip = ({ c = "" }: { c?: string }) => (
  <div className={`h-px w-[17px] shrink-0 bg-[repeating-linear-gradient(90deg,#b5b5b5_0_1px,transparent_1px_3px)] ${c}`} />
);
const VGrip = () => <div className="h-[18px] w-px bg-[repeating-linear-gradient(#b5b5b5_0_1px,transparent_1px_3px)]" />;
const Sep = ({ c = "" }: { c?: string }) => <div className={`h-5 w-px shrink-0 bg-[#cfcfcf] ${c}`} />;

const bar = "flex items-center bg-gradient-to-b from-[#fbfbfb] to-[#eeeeee] border-b border-[#b9b9b9] shrink-0";
const field = "rounded-[2px] border border-[#b0b0b0] bg-white";
const btn = "rounded-[2px] border border-[#b0b0b0] bg-gradient-to-b from-white to-[#eeeeee]";

const DockTitle = ({ t, c }: { t: string; c: string }) => (
  <div className={`flex items-center ${ui} ${c}`}>
    <span className="grow">{t}</span>
    <svg viewBox="0 0 11 11" className="size-[11px]"><g fill="none" stroke="#666"><rect x=".5" y=".5" width="10" height="10" rx="1.5" /><rect x="2.5" y="4.5" width="4" height="4" /><path d="M4.500 4.500v-2h4v4h-2" /></g></svg>
    <svg viewBox="0 0 11 11" className="ml-[3px] size-[11px]"><rect x=".5" y=".5" width="10" height="10" rx="1.5" fill="none" stroke="#666" /><path d="M3 3l5 5M8 3L3 8" stroke="#555" strokeWidth="1.8" /></svg>
  </div>
);

const Check = ({ c = "" }: { c?: string }) => (
  <svg viewBox="0 0 14 14" className={`size-[14px] shrink-0 ${c}`}><rect x=".5" y=".5" width="13" height="13" fill="#fff" stroke="#b5b5b5" /><path d="M3.500 6.500L6 10.500 10.500 3" fill="none" stroke="#000" strokeWidth="1.9" /></svg>
);

const menus: [string, string, string][] = [
  ["Pro", "j", "ect"], ["", "E", "dit"], ["", "V", "iew"], ["", "L", "ayer"], ["", "S", "ettings"], ["", "P", "lugins"], ["Vect", "o", "r"],
  ["", "R", "aster"], ["", "D", "atabase"], ["", "W", "eb"], ["", "M", "esh"], ["Pro", "c", "essing"], ["", "H", "elp"],
];
const menuW = ["w-[51px]", "w-[34px]", "w-[39px]", "w-[42px]", "w-[56px]", "w-[53px]", "w-[47px]", "w-[46px]", "w-[62px]", "w-[38px]", "w-[43px]", "w-[71px]", "w-[40px]"];

/* interpolated raster: [x, y, radius] of high and low stations */
const hi = [[435, 48, 30], [381, 162, 24], [355, 170, 24], [330, 188, 27], [286, 170, 15], [221, 218, 30], [221, 185, 9], [190, 226, 9], [267, 237, 16], [414, 111, 8], [486, 107, 10], [499, 117, 13], [396, 231, 20], [446, 216, 14], [516, 215, 15], [552, 219, 32], [594, 104, 19], [688, 99, 25], [754, 88, 17], [845, 73, 30], [903, 70, 26], [967, 50, 36], [811, 97, 13], [903, 115, 14], [1008, 120, 42], [712, 167, 21], [827, 181, 19], [979, 180, 21], [1051, 210, 52], [976, 228, 30], [757, 136, 9], [777, 134, 8], [735, 127, 6], [767, 183, 8], [125, 208, 8], [820, 112, 12]];
const lo: [number, number, number, number][] = [[131, 227, 36, 1], [180, 231, 18, 0.8], [184, 171, 28, 0.6], [223, 177, 10, 0.6], [290, 196, 27, 0.85], [373, 209, 20, 0.95], [396, 113, 27, 1], [424, 110, 9, 0.7], [449, 116, 22, 0.75], [481, 144, 24, 0.4], [502, 99, 15, 0.6], [537, 104, 22, 0.6], [389, 140, 20, 0.4], [466, 211, 15, 0.7], [498, 205, 20, 0.5], [594, 162, 22, 0.4], [618, 88, 22, 0.5], [615, 45, 26, 0.35], [558, 143, 26, 0.3], [620, 209, 34, 0.6], [645, 220, 38, 1], [699, 195, 32, 0.85], [750, 130, 14, 0.6], [776, 75, 22, 0.3], [797, 109, 19, 0.65], [851, 142, 28, 0.75], [852, 177, 22, 0.5], [910, 44, 26, 1], [932, 110, 30, 0.75], [1058, 147, 36, 0.6], [762, 196, 20, 0.35], [960, 189, 20, 0.5], [1002, 231, 10, 0.4], [573, 58, 10, 0.4], [670, 92, 10, 0.4]];

const RasterMap = () => (
  <svg viewBox="27 30 1131 228" preserveAspectRatio="none" className="h-[76px] w-[377px]">
    <defs>
      <filter id="magma" x="0" y="0" width="1" height="1" colorInterpolationFilters="sRGB">
        <feComponentTransfer>
          <feFuncR type="table" tableValues="0 .08 .23 .39 .55 .72 .87 .97 .996 .996 .99" />
          <feFuncG type="table" tableValues="0 .055 .06 .10 .16 .216 .286 .44 .62 .81 .99" />
          <feFuncB type="table" tableValues=".016 .21 .44 .50 .506 .475 .41 .36 .43 .57 .75" />
        </feComponentTransfer>
      </filter>
      <linearGradient id="base"><stop stopColor="#707070" /><stop offset=".25" stopColor="#767676" /><stop offset=".6" stopColor="#7c7c7c" /><stop offset=".82" stopColor="#8b8b8b" /><stop offset="1" stopColor="#949494" /></linearGradient>
      <radialGradient id="H"><stop stopColor="#fff" stopOpacity=".93" /><stop offset=".15" stopColor="#fff" stopOpacity=".75" /><stop offset=".35" stopColor="#fff" stopOpacity=".42" /><stop offset=".6" stopColor="#fff" stopOpacity=".16" /><stop offset="1" stopColor="#fff" stopOpacity="0" /></radialGradient>
      <radialGradient id="L"><stop stopColor="#000" stopOpacity="1" /><stop offset=".15" stopColor="#000" stopOpacity=".82" /><stop offset=".35" stopColor="#000" stopOpacity=".48" /><stop offset=".6" stopColor="#000" stopOpacity=".2" /><stop offset="1" stopColor="#000" stopOpacity="0" /></radialGradient>
    </defs>
    <g filter="url(#magma)">
      <rect x="27" y="30" width="1131" height="228" fill="url(#base)" />
      <ellipse cx="640" cy="210" rx="150" ry="120" fill="url(#L)" opacity=".4" />
      <ellipse cx="460" cy="120" rx="190" ry="95" fill="url(#L)" opacity=".36" />
      <ellipse cx="600" cy="90" rx="140" ry="110" fill="url(#L)" opacity=".3" />
      <ellipse cx="130" cy="215" rx="150" ry="110" fill="url(#L)" opacity=".3" />
      <ellipse cx="1030" cy="170" rx="150" ry="170" fill="url(#H)" opacity=".25" />
      {lo.map(([x, y, r, o], i) => <circle key={i} cx={x} cy={y} r={r * 1.25} fill="url(#L)" opacity={o} />)}
      {hi.map(([x, y, r], i) => <circle key={i} cx={x} cy={y} r={r * 1.2} fill="url(#H)" opacity={r < 18 ? 0.75 : 1} />)}
    </g>
  </svg>
);

const tree: [string, string][] = [["fav", "Favorites"], ["bm", "Spatial Bookmarks"], ["pkg", "GeoPackage"], ["home", "Home"], ["sl", "SpatiaLite"], ["pg", "PostGIS"]];
const stations = [7, 6, 5, 4, 3, 2, 1];
const classes: [string, string, string, string][] = [
  ["0.000045218...", "bg-[#000003]", "0.0000", "text-[#b3a89c]"], ["0.411084956...", "bg-[#020109]", "0.4111", "text-[#9fae9f]"],
  ["0.822126791...", "bg-[#040312]", "0.8221", "text-[#b3a3a3]"], ["1.233166529...", "bg-[#08061d]", "1.2332", "text-[#a8a0a8]"],
];

export default function App() {
  return (
    <div className={`relative flex h-[727px] w-[1365px] flex-col overflow-hidden whitespace-nowrap bg-[#f0f0f0] text-black ${ui}`}>
      <div className="flex h-[22px] shrink-0 items-center bg-white pl-px">
        <I n="qgis" c="mb-[2px]" s="size-[17px]" />
        <span className="ml-1 grow leading-4">*Untitled Project — QGIS</span>
        <svg viewBox="0 0 110 12" className="mr-[15px] mb-1 h-3 w-[110px]"><path d="M4 6.500h10M49.500 4.500h7v7h-7zM51.500 4.500v-2h7v7h-2M95 1.500l10 10M105 1.500l-10 10" fill="none" stroke="#000" /></svg>
      </div>
      <div className="flex h-5 shrink-0 items-center border-b border-[#d6d6d6] pl-[9px]">
        {menus.map(([a, u, b], i) => <span key={i} className={`${menuW[i]} shrink-0`}>{a}<span className="underline underline-offset-2">{u}</span>{b}</span>)}
      </div>

      <div className={`${bar} h-[39px]`}>
        <Grip c="ml-1" />
        <I n="new" c="ml-[7px]" />
        <div className={`ml-[5px] flex h-[31px] w-8 items-center justify-center ${btn}`}><I n="open" c="" /></div>
        <I n="save" c="ml-[5px]" /><I n="layout" /><I n="manager" /><I n="style" />
        <Grip c="ml-[13px]" />
        <div className="ml-[3px] flex h-[31px] w-8 items-center justify-center rounded-[2px] border border-[#a9a9a9] bg-[#dcdcdc]"><I n="hand" c="" /></div>
        <I n="pan" c="ml-[5px]" />
        {["zin", "zout", "zfull", "zsel", "zlay", "znat", "zlast", "znext", "nmap", "n3d", "nbook", "book"].map((n) => <I key={n} n={n} />)}
        <div className="ml-[5px] flex h-[31px] w-8 items-center justify-center rounded-[2px] border border-[#a9a9a9] bg-[#dcdcdc]"><I n="clockbig" c="" /></div>
        <I n="refresh" c="ml-[5px]" />
        <Grip c="ml-[12px]" />
        <I n="ident" c="ml-2" /><I n="table" /><I n="abacus" /><I n="gear" /><I n="sigma" /><I n="ruler" /><Dd c="ml-[6px]" />
        <I n="tip" c="ml-[7px]" /><I n="action" /><Dd off c="ml-[5px]" /><I n="text" c="ml-2" /><Dd c="ml-[6px]" />
      </div>

      <div className={`${bar} h-[39px]`}>
        <Grip c="ml-1" />
        <I n="layers" c="ml-[7px]" /><I n="gpkg" /><I n="vstar" /><I n="fstar" /><I n="chip" />
        <Sep c="ml-2" /><I n="virt" c="ml-[7px]" /><Sep c="ml-[9px]" /><Grip c="ml-[10px]" />
        <I n="pencils" c="ml-2" /><I n="pencil" /><I n="saveed" /><I n="addpts" /><I n="vertex" /><Dd off c="ml-[4px]" />
        <I n="modattr" c="ml-2" /><I n="trash" /><I n="cut" /><I n="copy" /><I n="paste" /><I n="undo" /><I n="redo" />
        <Grip c="ml-[13px]" /><I n="tag" c="ml-[6px]" /><I n="diag" c="ml-[10px]" /><Sep c="ml-2" />
        <I n="pinred" c="ml-[7px]" /><I n="tagred" /><Sep c="ml-2" />
        <I n="tpin" c="ml-[7px]" /><I n="teye" /><I n="tmove" /><I n="trot" /><I n="tedit" />
        <Grip c="ml-[13px]" /><Grip c="ml-[12px]" />
        <I n="python" c="ml-[7px]" /><I n="fire" /><I n="leaf" /><I n="earth" /><Grip c="ml-[13px]" />
        <I n="help" c="ml-[7px]" /><Grip c="ml-[12px]" /><I n="topo" c="ml-2" /><I n="sheet" />
      </div>

      <div className={`${bar} h-[38px]`}>
        <Grip c="ml-1" />
        <I n="osm" c="ml-[7px]" /><I n="osmed" /><Grip c="ml-[13px]" /><I n="find" c="ml-[7px]" />
        <div className={`ml-[5px] flex h-[22px] w-[81px] items-center justify-between px-[3px] pr-[6px] ${btn}`}><span className="pt-[2px]">Ghana</span><Dd /></div>
        <div className={`ml-px flex h-[22px] w-[108px] items-center px-[2px] text-[#777] ${field}`}><span className="pt-[2px]">Search for...</span></div>
        <Grip c="ml-[9px]" /><I n="selfeat" c="ml-[7px]" /><Dd off c="ml-[6px]" />
        <I n="selform" c="ml-[9px]" /><Dd off c="ml-[4px]" /><I n="desel" c="ml-2" /><Dd c="ml-[5px]" />
        <I n="selloc" c="ml-[7px]" /><Grip c="ml-[13px]" /><I n="plot" c="ml-[7px]" /><Grip c="ml-[13px]" />
      </div>

      <div className="flex h-[541px] shrink-0">
        {/* vertical data source toolbar */}
        <div className="flex w-[51px] shrink-0 flex-col border-r border-[#b9b9b9] bg-gradient-to-r from-[#fbfbfb] to-[#ededed]">
          <div className="mt-[6px] ml-[17px] flex h-[5px] flex-col justify-between"><HGrip /><HGrip /></div>
          <div className="mt-[6px] ml-[7px] flex flex-col gap-2">
            {["vplus", "rplus", "mesh", "comma", "fplus", "vlplus", "pgplus", "gplus", "wcs", "wfs", "boxadd"].map((n) => (
              <div key={n} className="flex items-center"><I n={n} c="" />{(n === "pgplus" || n === "boxadd") && <Dd c="ml-[6px]" />}</div>
            ))}
          </div>
        </div>

        <div className="flex w-[375px] shrink-0 flex-col">
          <DockTitle t="Browser" c="h-[22px] pl-1 pr-[2px]" />
          <div className="flex h-[29px] items-center gap-[9px] pb-[3px] pl-2">
            {["addsq", "refresh", "funnel", "up", "info"].map((n) => <I key={n} n={n} c="" s="size-4" />)}
          </div>
          <div className="flex h-[102px] border border-[#b5b5b5] bg-white">
            <div className="h-full grow overflow-hidden">
              {tree.map(([n, t], i) => (
                <div key={n} className="flex h-[18px] items-center pl-[4px]">
                  <Tri d="r" c={i === 0 || i === 5 ? "invisible" : ""} />
                  <I n={n} c="ml-[7px]" s="size-4" /><span className="ml-[6px] pt-[2px]">{t}</span>
                </div>
              ))}
            </div>
            <div className="flex w-[14px] flex-col items-center border-l border-[#b5b5b5] bg-[#e6e6e6]">
              <div className="flex h-[14px] w-full items-center justify-center border-b border-[#b5b5b5] bg-[#f8f8f8]"><Tri d="u" /></div>
              <div className="h-[27px] w-full border-b border-[#b5b5b5] bg-[#fcfcfc]" />
              <div className="grow" />
              <div className="flex h-[14px] w-full items-center justify-center border-t border-[#b5b5b5] bg-[#f8f8f8]"><Tri d="d" /></div>
            </div>
          </div>
          <div className="flex h-[6px] items-center justify-center"><HGrip /></div>
          <DockTitle t="Layers" c="h-[20px] pl-1 pr-[2px]" />
          <div className="flex h-[30px] items-center pb-[2px] pl-1">
            <div className="flex h-[23px] w-6 items-center justify-center rounded-[2px] border border-[#a9a9a9] bg-[#dcdcdc]"><I n="brush" c="" s="size-4" /></div>
            <I n="group" c="ml-[5px]" s="size-4" /><I n="eye" c="ml-[8px]" s="size-[18px]" /><I n="funneldd" c="ml-[7px]" s="size-[18px]" />
            <I n="eps" c="ml-[8px]" s="size-4" /><Dd off c="ml-1" /><I n="down" c="ml-2" s="size-4" /><I n="up" c="ml-[9px]" s="size-4" /><I n="rmsq" c="ml-[8px]" s="size-4" />
          </div>
          <div className="h-[332px] border border-[#b5b5b5] bg-white font-bold tracking-[-0.3px]">
            {stations.map((k) => (
              <div key={k} className={`flex h-[18px] items-center pl-[6px] ${k === 7 ? "bg-[#f0f0f0]" : ""}`}>
                <Tri d="r" /><Check c="ml-[9px]" />
                <I n={k === 7 ? "rastersel" : "raster"} c="ml-2" s="size-[13px]" />
                <span className="ml-[7px] grow pt-[2px] leading-[14px]"><span className={k === 7 ? "underline underline-offset-2" : ""}>meteo_station_{k}</span></span>
                <div className="mr-[5px] flex size-[17px] items-center justify-center rounded-[1px] border border-[#e0e0e0] bg-[#fafafa]"><I n={k === 7 ? "clockblue" : "clock"} c="" s="size-[13px]" /></div>
              </div>
            ))}
          </div>
        </div>

        <div className="flex w-[6px] shrink-0 items-center justify-center"><VGrip /></div>

        <div className="flex w-[561px] shrink-0 flex-col">
          <DockTitle t="Temporal Controller" c="h-[20px] pl-1 pr-[2px] pt-px" />
          <div className={`flex h-6 items-center ${tah}`}>
            <div className={`flex h-[23px] w-6 items-center justify-center ${btn}`}><I n="noclock" c="" s="size-4" /></div>
            <div className="ml-[2px] flex h-[23px] w-6 items-center justify-center rounded-[2px] border border-[#b0b0b0] bg-[#dcdcdc]"><I n="clock" c="" s="size-4" /></div>
            <div className={`ml-[2px] flex h-[23px] w-6 items-center justify-center ${btn}`}><I n="play" c="" s="size-4" /></div>
            <span className="ml-px tracking-[-0.06px]">Range: 2021-01-31 23:59:00 to 2021-02-07 23:00:00</span>
          </div>
          <div className={`mt-[6px] flex h-5 items-center ${tah}`}>
            <span className="w-[33px]">Range</span>
            <div className={`flex h-5 w-[167px] items-center ${field}`}><span className="grow pl-1 tracking-[-0.08px]">2021-01-31 23:59:00</span><UpDown off /></div>
            <span className="w-[17px] pl-[2px]">to</span>
            <div className={`flex h-5 w-[168px] items-center ${field}`}><span className="grow pl-1 tracking-[-0.08px]">2021-02-07 23:00:00</span><UpDown off /></div>
            <I n="refresh" c="ml-[6px]" s="size-4" /><Dd c="ml-[6px]" />
          </div>
          <div className="mt-[68px] flex h-[14px] border-t border-[#b5b5b5] bg-[#e6e6e6]">
            <div className="flex w-[14px] items-center justify-center border-r border-[#b5b5b5] bg-[#f8f8f8]"><Tri d="l" /></div>
            <div className="grow border-r border-[#b5b5b5] bg-[#fafafa]" />
            <div className="w-[27px]" />
            <div className="flex w-[14px] items-center justify-center border-l border-[#b5b5b5] bg-[#f8f8f8]"><Tri d="r" /></div>
          </div>
          <div className="flex h-[6px] items-center justify-center"><HGrip /></div>
          <div className="h-[383px] border border-[#b5b5b5] bg-white pt-[153px] pl-[91px]"><RasterMap /></div>
        </div>

        <div className="flex w-[6px] shrink-0 items-center justify-center"><VGrip /></div>

        <div className="flex w-[366px] shrink-0 flex-col">
          <DockTitle t="Layer Styling" c="h-[22px] pl-1 pr-[2px]" />
          <div className={`mt-px ml-[3px] flex h-6 w-[360px] items-center pr-[7px] pl-[7px] ${btn} ${tah}`}>
            <I n="raster" c="" s="size-[13px]" /><span className="ml-[3px] grow tracking-[0px]">meteo_station_7</span><Dd />
          </div>
          <div className="ml-[3px] mt-[6px] flex h-[460px]">
            <div className="flex w-[38px] shrink-0 flex-col bg-[#5d5d5d]">
              <div className="flex h-[32px] items-center justify-center bg-[#f0f0f0]"><I n="symb" c="" s="size-[22px]" /></div>
              <div className="flex flex-col gap-[10px] pt-[6px] pl-1">
                {["transp", "histo", "attr", "hist"].map((n) => <I key={n} n={n} c="" s="size-[22px]" />)}
              </div>
            </div>
            <div className="ml-[3px] flex w-[319px] flex-col">
              <div className="flex h-[417px]">
                <div className={`flex w-[305px] shrink-0 flex-col overflow-hidden ${tah} text-[#111]`}>
                  <div className={`flex h-6 w-[330px] shrink-0 items-center pl-[6px] ${btn}`}><I n="pseudo" c="" s="size-[13px]" /><span className="ml-[4px]">Singleband pseudocolor</span></div>
                  <div className="mt-[9px] flex h-[22px] shrink-0 items-center pl-[2px]"><span className="w-[65px]">Band</span><div className={`flex h-[22px] w-[280px] shrink-0 items-center pl-[3px] ${btn}`}><span>Band 1</span></div></div>
                  <div className="mt-[6px] flex h-[22px] shrink-0 items-center pl-[2px]">
                    <span className="w-[65px]">Min</span><div className={`flex h-[22px] w-[108px] shrink-0 items-center pl-[2px] ${field}`}><span>0.000045218106</span></div>
                    <span className="ml-[5px] w-[65px]">Max</span><div className={`flex h-[22px] w-[100px] shrink-0 items-center overflow-hidden ${field}`}><span className="-ml-[4px]">0.963118000000</span></div>
                  </div>
                  <div className="mt-[4px] flex h-[22px] shrink-0 items-center pl-[7px] font-bold tracking-[0.05px]"><svg viewBox="0 0 8 12" className="h-3 w-2 shrink-0"><path d="M1 1v10l6-5z" fill="#333" stroke="#111" /></svg><span className="ml-[9px]">Min / Max Value Settings</span></div>
                  <div className="mt-[5px] flex h-[22px] shrink-0 items-center pl-[2px]"><span className="w-[122px]">Interpolation</span><div className={`flex h-[22px] w-[240px] shrink-0 items-center pl-[3px] ${btn}`}><span>Linear</span></div></div>
                  <div className="mt-[6px] flex h-[22px] shrink-0 items-center pl-[2px]"><span className="w-[122px]">Color ramp</span><div className={`flex h-[22px] w-[240px] shrink-0 items-center pl-1 ${btn}`}><div className="h-4 w-[222px] bg-[linear-gradient(90deg,#000004_0%,#140e36_10%,#3b0f70_20%,#641a80_30%,#8c2981_40%,#b73779_50%,#de4968_60%,#f7705c_70%,#fe9f6d_77%,#fecf92_90%,#fcfdbf_100%)]" /></div></div>
                  <div className="mt-[6px] flex h-[22px] shrink-0 items-center pl-[2px]"><span className="w-[122px]">Label unit suffix</span><div className={`h-[22px] w-[240px] shrink-0 ${field}`} /></div>
                  <div className="mt-[7px] flex h-5 shrink-0 items-center pl-[2px]"><span className="w-[122px]">Label precision</span><div className={`flex h-5 w-[240px] shrink-0 items-center pl-1 ${field}`}><span>4</span></div></div>
                  <div className={`mt-[7px] ml-[3px] flex h-[191px] w-[330px] shrink-0 flex-col overflow-hidden border border-[#b5b5b5] bg-white text-black ${ui}`}>
                    <div className="flex h-[19px] shrink-0 items-center border-b border-[#b5b5b5] bg-gradient-to-b from-white to-[#f0f0f0]">
                      <span className="h-full w-[100px] border-r border-[#cfcfcf] pl-[2px]">Value</span><span className="h-full w-[59px] border-r border-[#cfcfcf] pl-[2px]">Color</span><span className="pl-[3px]">Label</span>
                    </div>
                    {classes.map(([v, bg, l, tc]) => (
                      <div key={v} className="flex h-11 shrink-0 items-center">
                        <span className="w-[95px] text-right tracking-[-0.65px]">{v}</span>
                        <div className={`ml-[13px] size-[42px] rounded-[6px] ${bg}`} />
                        <span className={`ml-3 tracking-[-0.7px] ${tc}`}>{l}</span>
                      </div>
                    ))}
                  </div>
                </div>
                <div className="flex w-[14px] flex-col border-l border-[#b5b5b5] bg-[#e6e6e6]">
                  <div className="flex h-[14px] items-center justify-center border-b border-[#b5b5b5] bg-[#f8f8f8]"><Tri d="u" /></div>
                  <div className="h-[160px] border-b border-[#b5b5b5] bg-[#fcfcfc]" />
                  <div className="grow" />
                  <div className="flex h-[14px] items-center justify-center border-t border-[#b5b5b5] bg-[#f8f8f8]"><Tri d="d" /></div>
                </div>
              </div>
              <div className="flex h-[14px] w-[306px] border-t border-r border-[#b5b5b5] bg-[#e6e6e6]">
                <div className="flex w-[14px] items-center justify-center border-r border-[#b5b5b5] bg-[#f8f8f8]"><Tri d="l" /></div>
                <div className="w-[238px] border-r border-[#b5b5b5] bg-[#fafafa]" />
                <div className="grow" />
                <div className="flex w-[14px] items-center justify-center border-l border-[#b5b5b5] bg-[#f8f8f8]"><Tri d="r" /></div>
              </div>
              <div className={`mt-[6px] flex h-[23px] items-center ${tah}`}>
                <div className={`flex h-[23px] w-6 items-center justify-center ${btn}`}><I n="undoc" c="" s="size-[14px]" /></div>
                <div className={`ml-[6px] flex h-[23px] w-6 items-center justify-center ${btn}`}><I n="redoc" c="" s="size-[14px]" /></div>
                <Check c="ml-[98px]" /><span className="ml-1 w-[69px]">Live update</span>
                <div className={`flex h-[21px] w-20 shrink-0 items-center justify-center ${btn}`}><span>Apply</span></div>
              </div>
            </div>
          </div>
          <div className={`mt-1 flex h-6 border-t border-[#c4c4c4] ${tah}`}>
            <div className="-mt-px flex h-[23px] w-[87px] items-center justify-center rounded-b-[2px] border border-t-0 border-[#b5b5b5] bg-[#f7f7f7]"><span className="pr-[2px]">Layer Styling</span></div>
            <div className="-mt-px flex h-[21px] w-[115px] items-center justify-center rounded-b-[2px] border border-l-0 border-[#b5b5b5] bg-[#dadada]"><span className="tracking-[-0.15px]">Processing Toolbox</span></div>
          </div>
        </div>
      </div>

      <div className={`flex h-[28px] shrink-0 items-center pb-px pl-[3px] ${tah} [&_span]:pt-[4px]`}>
        <div className={`flex h-[22px] w-[200px] items-center text-[#808080] ${field}`}><I n="mag" c="ml-2" s="size-3" /><span className="ml-[7px] tracking-[-0.03px]">Type to locate (Ctrl+K)</span></div>
        <span className="ml-2 w-[361px]">7 legend entries removed.</span>
        <span className="w-[57px]">Coordinate</span>
        <div className={`flex h-[22px] w-[85px] items-center pl-[6px] ${field}`}><span>74230,189832</span></div>
        <I n="mouse" c="ml-1" s="size-4" />
        <span className="ml-3 w-[29px]">Scale</span>
        <div className={`flex h-[22px] w-[81px] items-center ${field}`}><span className="w-[60px] pl-[3px]">1:1832591</span><div className="flex h-full grow items-center justify-center border-l border-[#b5b5b5] bg-[#f8f8f8]"><Dd /></div></div>
        <I n="lock" c="ml-[11px]" s="size-[14px]" />
        <span className="ml-[7px] w-[48px]">Magnifier</span>
        <div className={`flex h-5 w-[88px] items-center ${field}`}><span className="grow pl-1">100%</span><UpDown /></div>
        <span className="ml-2 w-[51px]">Rotation</span>
        <div className={`flex h-5 w-[84px] items-center ${field}`}><span className="grow pl-1">0.0 °</span><UpDown /></div>
        <Check c="ml-[6px]" /><span className="ml-1 w-[53px]">Render</span>
        <I n="crs" c="" s="size-[15px]" /><span className="ml-[3px] w-[79px]">EPSG:26391</span><I n="msg" c="" s="size-4" />
      </div>

      <div className="pointer-events-none absolute top-[648px] left-[1072px] text-[#838383]/55">
        <div className="text-[20px] leading-[26px] tracking-[-0.4px]">Activate Windows</div>
        <div className="text-[15px] leading-5 tracking-[-0.3px]">Go to Settings to activate Windows.</div>
      </div>
    </div>
  );
}
